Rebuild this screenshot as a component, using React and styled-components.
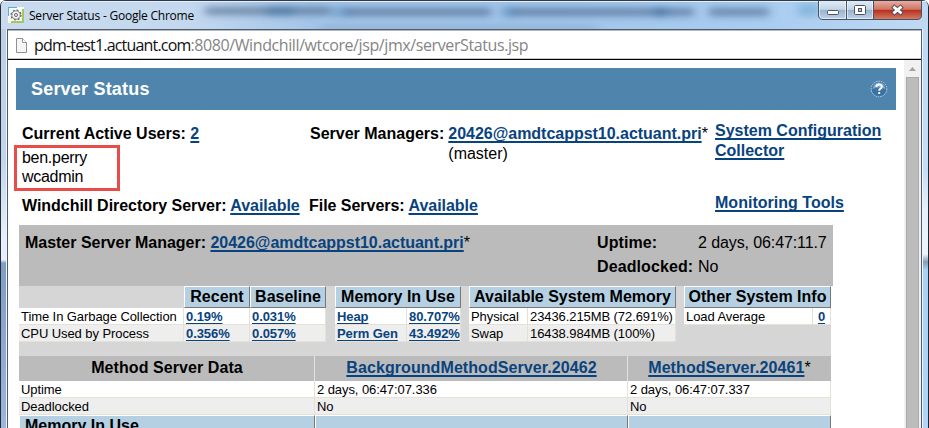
import React from 'react';
import styled, { createGlobalStyle } from 'styled-components';

const GlobalStyle = createGlobalStyle`
  * {
    box-sizing: border-box;
  }

  body {
    margin: 0;
    overflow: hidden;
    background: #fff;
    font-family: 'Liberation Sans', Arial, sans-serif;
    color: #000;
  }
`;

const Window = styled.div`
  display: grid;
  grid-template-rows: 29px 399px;
  width: 929px;
  height: 428px;
  overflow: hidden;
  border-left: 1px solid #252d3b;
  border-right: 1px solid #20262f;
  border-radius: 6px 7px 0 0;
  background: #b8d0ec;
`;

const TitleBar = styled.div`
  position: relative;
  display: flex;
  align-items: flex-start;
  border-top: 1px solid #303a4a;
  box-shadow: inset 0 1px #e3effb;
  background: linear-gradient(90deg, #c9daed 0, #c3d8ef 190px, #a4c5e8 310px, #a2c5eb 560px, #a9ccf0 760px, #bfd9f3 100%);
`;

const Backdrop = styled.svg`
  position: absolute;
  left: 0;
  top: 1px;
`;

const AppIcon = styled.svg`
  position: relative;
  margin: 6px 0 0 7px;
`;

const WindowTitle = styled.div`
  position: relative;
  margin: 6px auto 0 5px;
  font: 12px/18px 'Open Sans', 'Noto Sans', sans-serif;
  letter-spacing: -0.22px;
  color: #000;
  white-space: nowrap;
`;

const WindowButtons = styled.svg`
  position: relative;
  margin-right: 6px;
`;

const Frame = styled.div`
  display: grid;
  grid-template-columns: 6px 915px 6px;
`;

const Edge = styled.div`
  background: ${(props) => props.$right
    ? 'linear-gradient(90deg, #f0f6fc 1px, transparent 1px), linear-gradient(#bfd9f5 0, #c5ddf8 140px, #e6f0fb 180px, #edf4fb 225px, #829db7 233px, #a9d0f7 241px, #b0d5f9 100%)'
    : 'linear-gradient(90deg, transparent 5px, #edf4fc 5px), linear-gradient(#bdcfe4 0, #c1d5ec 130px, #e9effa 210px, #e9effa 231px, #809dc2 234px, #9bb8db 100%)'};
`;

const Client = styled.div`
  border: 1px solid #4d5b6c;
  border-bottom: 0;
  background: #fff;
`;

const AddressBar = styled.div`
  display: flex;
  align-items: center;
  height: 30px;
  padding-left: 8px;
  border-top: 1px solid #b4bbc4;
  border-bottom: 1px solid #000;
  box-shadow: inset 0 -1px #c4cbd4;
`;

const Url = styled.div`
  margin-left: 7px;
  font: 16px/26px 'Open Sans', 'Noto Sans', sans-serif;
  letter-spacing: -0.4px;
  color: #858585;
  white-space: nowrap;

  span {
    color: #111;
    letter-spacing: -0.82px;
  }
`;

const Viewport = styled.div`
  display: grid;
  grid-template-columns: 896px 17px;
  height: 368px;
`;

const Scrollbar = styled.div`
  display: flex;
  flex-direction: column;
  align-items: center;
  background: #f1f1f1;
`;

const Thumb = styled.div`
  width: 13px;
  flex: 1;
  border: 1px solid #a8a8a8;
  border-bottom: 0;
  background: #bcbcbc;
`;

const Page = styled.div`
  height: 368px;
  padding: 8px 8px 0;
  overflow: hidden;
`;

const PageHeader = styled.div`
  display: flex;
  align-items: center;
  justify-content: space-between;
  height: 42px;
  padding: 0 8px 0 15px;
  background: #4f85ad;
  color: #fff;
  font-size: 18px;
  font-weight: bold;
  letter-spacing: 0.2px;
`;

const Link = styled.a`
  color: #08437f;
  font-weight: bold;
  text-decoration: underline;
  text-decoration-thickness: ${(props) => (props.$small ? '1px' : '2px')};
  text-underline-offset: 2px;
  text-decoration-skip-ink: none;
`;

const Summary = styled.div`
  display: grid;
  grid-template-columns: 288px 405px 1fr;
  height: 81px;
  padding-left: 6px;
  font-size: 16px;
  line-height: 20px;
  white-space: nowrap;
`;

const ActiveUsers = styled.div`
  padding-top: 14px;
`;

const UserList = styled.div`
  width: 106px;
  height: 46px;
  margin: 1px 0 0 -8px;
  padding: 0 5px;
  border: 3px solid #e94d49;
  line-height: 19px;
  letter-spacing: -0.28px;
`;

const Managers = styled.div`
  display: flex;
  gap: 4px;
  padding-top: 14px;
`;

const ManagerLink = styled(Link)`
  letter-spacing: -0.02px;
`;

const Tools = styled.div`
  padding-top: 11px;
`;

const Services = styled.div`
  display: grid;
  grid-template-columns: 287px 406px 1fr;
  height: 34px;
  padding: 5px 0 0 6px;
  font-size: 16px;
  line-height: 20px;
  letter-spacing: -0.03px;
  white-space: nowrap;
`;

const MonitoringTools = styled.div`
  margin-top: -3px;
  letter-spacing: 0.02px;
`;

const ManagerPanel = styled.div`
  display: grid;
  grid-template-columns: 572px 101px 1fr;
  grid-template-rows: 24px 24px;
  width: 814px;
  height: 61px;
  margin-left: 3px;
  padding: 6px 0 0 6px;
  background: #bbb;
  font-size: 16px;
  line-height: 24px;
`;

const PanelTitle = styled.div`
  letter-spacing: -0.02px;
`;

const PanelLabel = styled.b`
  letter-spacing: 0.1px;
`;

const PanelValue = styled.div`
  letter-spacing: -0.1px;
`;

const Metrics = styled.div`
  display: flex;
  align-items: flex-start;
  width: 812px;
  height: 70px;
  margin-left: 3px;
  background: #d6d6d6;
`;

const MetricTable = styled.div`
  display: grid;
  grid-template-columns: ${(props) => props.$columns};
  grid-template-rows: 22px;
  grid-auto-rows: 17px;
  margin-right: ${(props) => props.$gap}px;
`;

const HeadCell = styled.div`
  grid-column: span ${(props) => props.$span || 1};
  border: 1px solid;
  border-color: #fff #777 #777 #fff;
  background: #b4d0e2;
  font-size: 16px;
  font-weight: bold;
  line-height: 19px;
  text-align: center;
  white-space: nowrap;
`;

const Cell = styled.div`
  padding: 0 2px;
  border-right: 1px solid #e3e2d5;
  border-bottom: 1px solid #e3e2d5;
  background: ${(props) => (props.$alt ? '#eee' : '#fff')};
  font-size: 13px;
  line-height: 17px;
  letter-spacing: -0.08px;
  text-align: ${(props) => props.$align || 'left'};
  white-space: nowrap;
`;

const MethodTable = styled.div`
  display: grid;
  grid-template-columns: 296px 313px 203px;
  grid-template-rows: 25px 17px 17px 22px;
  width: 812px;
  margin-left: 3px;
`;

const MethodHead = styled.div`
  padding-left: 1px;
  border-right: 1px solid ${(props) => (props.$last ? '#bbb' : '#e3e3e0')};
  background: #bbb;
  font-size: 16px;
  font-weight: bold;
  line-height: 23px;
  letter-spacing: 0.08px;
  text-align: center;
`;

const SectionCell = styled.div`
  padding-left: 5px;
  border-top: 1px solid #fff;
  border-left: 1px solid #fff;
  border-right: 1px solid #777;
  background: #b4d0e2;
  font-size: 16px;
  font-weight: bold;
  line-height: 19px;
`;

const Star = styled.span`
  font-weight: normal;
`;

const BlurredDesktop = () => (
  <Backdrop width="927" height="27">
    <defs>
      <filter id="soft" filterUnits="userSpaceOnUse" x="0" y="-20" width="927" height="70">
        <feGaussianBlur stdDeviation="5 3" />
      </filter>
    </defs>
    <g filter="url(#soft)" fill="none" stroke="#2f486b">
      <path d="M204 9H330M345 10H490M510 10H693M708 10H768" strokeWidth="9" opacity=".45" />
      <path d="M265 9h28M332 10h17M500 10h14M652 10h15" stroke="#2b6799" strokeWidth="11" opacity=".35" />
      <path d="M320 26h275" strokeWidth="3" opacity=".3" />
      <path d="M797 8h22" stroke="#60a2ce" strokeWidth="13" opacity=".5" />
    </g>
  </Backdrop>
);

const GearIcon = () => (
  <AppIcon width="16" height="16" viewBox="0 0 16 16">
    <rect width="16" height="16" fill="#f9fbf6" />
    <path d="M0 0H9V1H1V9H0Z" fill="#58aee1" />
    <path d="M16 2V16H3V14H14V2Z" fill="#a5c85a" />
    <circle cx="8" cy="8" r="4.2" fill="#f4f4f4" stroke="#666" strokeWidth=".8" />
    <circle cx="8" cy="8" r="5" fill="none" stroke="#555" strokeWidth="1.1" strokeDasharray="1.9 2.03" />
    <circle cx="8" cy="8" r="1.5" fill="#fff" stroke="#555" strokeWidth=".9" />
  </AppIcon>
);

const Controls = () => (
  <WindowButtons width="104" height="20">
    <defs>
      <linearGradient id="glass" x1="0" y1="0" x2="0" y2="1">
        <stop offset="0" stopColor="#dfecf7" />
        <stop offset=".45" stopColor="#c2d5e8" />
        <stop offset=".5" stopColor="#9ab3cc" />
        <stop offset="1" stopColor="#bdd5eb" />
      </linearGradient>
      <linearGradient id="close" x1="0" y1="0" x2="0" y2="1">
        <stop offset="0" stopColor="#e9aca0" />
        <stop offset=".45" stopColor="#cf7565" />
        <stop offset=".5" stopColor="#b92f1c" />
        <stop offset="1" stopColor="#d0806a" />
      </linearGradient>
    </defs>
    <path d="M.5 0V14Q.5 18.5 5 18.5H56V0Z" fill="url(#glass)" />
    <path d="M56 0V18.5H99Q103.5 18.5 103.5 14V0Z" fill="url(#close)" />
    <path d="M.5 0V14Q.5 18.5 5 18.5H99Q103.5 18.5 103.5 14V0M28.5 0V18M55.5 0V18" fill="none" stroke="#4b5361" />
    <path d="M1.5 0V14Q1.5 17.5 5 17.5H27.5V0M29.5 0V17.5H54.5V0" fill="none" stroke="#fff" opacity=".55" />
    <rect x="9.5" y="9.5" width="11" height="4" rx="1" fill="#fff" stroke="#4c5261" />
    <rect x="36.5" y="4.5" width="11" height="9" rx="1" fill="#fff" stroke="#4c5261" />
    <rect x="40.5" y="7.5" width="3" height="3" fill="#b2c6da" stroke="#4c5261" />
    <path d="M76.5 6.5 82.5 11.5M82.5 6.5 76.5 11.5" fill="none" stroke="#554d58" strokeWidth="4.7" strokeLinecap="square" />
    <path d="M76.5 6.5 82.5 11.5M82.5 6.5 76.5 11.5" fill="none" stroke="#fff" strokeWidth="2.8" strokeLinecap="square" />
  </WindowButtons>
);

const PageIcon = () => (
  <svg width="11" height="15" viewBox="0 0 11 15">
    <path d="M.5 .5H6.5L10.5 4.5V14.5H.5Z" fill="#f6f6f6" stroke="#919191" />
    <path d="M6.5 .5V4.5H10.5" fill="#fff" stroke="#919191" />
  </svg>
);

const HelpIcon = () => (
  <svg width="18" height="18" viewBox="0 0 18 18">
    <circle cx="9" cy="9" r="7.5" fill="#3c73a5" />
    <path d="M2.5 9Q3 3 9 2.2Q15 3 15.5 9Q9 6 2.5 9Z" fill="#7aa6cb" />
    <circle cx="9" cy="9" r="7.8" fill="none" stroke="#d5e1ec" strokeWidth=".9" strokeDasharray="1.4 1" />
    <path d="M6.3 7Q6.3 4.5 9 4.5Q11.8 4.5 11.8 6.7Q11.8 8 10.2 8.8Q9.2 9.3 9.2 10.8M9.2 12V14" fill="none" stroke="#fff" strokeWidth="1.9" />
  </svg>
);

// the small tables under the master server manager panel
const metricTables = [
  {
    columns: '165px 66px 76px',
    gap: 9,
    heads: [{ text: '' }, { text: 'Recent' }, { text: 'Baseline' }],
    rows: [
      [{ text: 'Time In Garbage Collection' }, { text: '0.19%', link: true }, { text: '0.031%', link: true }],
      [{ text: 'CPU Used by Process' }, { text: '0.356%', link: true }, { text: '0.057%', link: true }],
    ],
  },
  {
    columns: '72px 54px',
    gap: 8,
    heads: [{ text: 'Memory In Use', span: 2 }],
    rows: [
      [{ text: 'Heap', link: true }, { text: '80.707%', link: true, align: 'right' }],
      [{ text: 'Perm Gen', link: true }, { text: '43.492%', link: true, align: 'right' }],
    ],
  },
  {
    columns: '59px 148px',
    gap: 8,
    heads: [{ text: 'Available System Memory', span: 2 }],
    rows: [
      [{ text: 'Physical' }, { text: '23436.215MB (72.691%)' }],
      [{ text: 'Swap' }, { text: '16438.984MB (100%)' }],
    ],
  },
  {
    columns: '129px 18px',
    gap: 0,
    heads: [{ text: 'Other System Info', span: 2 }],
    rows: [[{ text: 'Load Average' }, { text: '0', link: true, align: 'center' }]],
  },
];

const SmallTable = ({ table }) => (
  <MetricTable $columns={table.columns} $gap={table.gap}>
    {table.heads.map((head, i) => (
      head.text ? <HeadCell key={i} $span={head.span}>{head.text}</HeadCell> : <div key={i} />
    ))}
    {table.rows.map((row, r) => row.map((cell, c) => (
      <Cell key={`${r}-${c}`} $alt={r % 2 === 1} $align={cell.align}>
        {cell.link ? <Link $small>{cell.text}</Link> : cell.text}
      </Cell>
    )))}
  </MetricTable>
);

const App = () => (
  <>
    <GlobalStyle />
    <Window>
      <TitleBar>
        <BlurredDesktop />
        <GearIcon />
        <WindowTitle>Server Status - Google Chrome</WindowTitle>
        <Controls />
      </TitleBar>
      <Frame>
        <Edge />
        <Client>
          <AddressBar>
            <PageIcon />
            <Url><span>pdm-test1.actuant.com</span>:8080/Windchill/wtcore/jsp/jmx/serverStatus.jsp</Url>
          </AddressBar>
          <Viewport>
            <Page>
              <PageHeader>
                Server Status
                <HelpIcon />
              </PageHeader>
              <Summary>
                <ActiveUsers>
                  <b>Current Active Users: <Link>2</Link></b>
                  <UserList>
                    <div>ben.perry</div>
                    <div>wcadmin</div>
                  </UserList>
                </ActiveUsers>
                <Managers>
                  <b>Server Managers:</b>
                  <div>
                    <ManagerLink>20426@amdtcappst10.actuant.pri</ManagerLink>*
                    <div>(master)</div>
                  </div>
                </Managers>
                <Tools>
                  <Link>System Configuration<br />Collector</Link>
                </Tools>
              </Summary>
              <Services>
                <b>Windchill Directory Server: <Link>Available</Link></b>
                <b>File Servers: <Link>Available</Link></b>
                <MonitoringTools><Link>Monitoring Tools</Link></MonitoringTools>
              </Services>
              <ManagerPanel>
                <PanelTitle>
                  <b>Master Server Manager:</b> <Link>20426@amdtcappst10.actuant.pri</Link>*
                </PanelTitle>
                <PanelLabel>Uptime:</PanelLabel>
                <PanelValue>2 days, 06:47:11.7</PanelValue>
                <div />
                <PanelLabel>Deadlocked:</PanelLabel>
                <PanelValue>No</PanelValue>
              </ManagerPanel>
              <Metrics>
                {metricTables.map((table, i) => <SmallTable key={i} table={table} />)}
              </Metrics>
              <MethodTable>
                <MethodHead>Method Server Data</MethodHead>
                <MethodHead><Link>BackgroundMethodServer.20462</Link></MethodHead>
                <MethodHead $last><Link>MethodServer.20461</Link><Star>*</Star></MethodHead>
                <Cell>Uptime</Cell>
                <Cell>2 days, 06:47:07.336</Cell>
                <Cell>2 days, 06:47:07.337</Cell>
                <Cell $alt>Deadlocked</Cell>
                <Cell $alt>No</Cell>
                <Cell $alt>No</Cell>
                <SectionCell>Memory In Use</SectionCell>
                <SectionCell />
                <SectionCell />
              </MethodTable>
            </Page>
            <Scrollbar>
              <svg width="17" height="17">
                <path d="M5 11 8.5 7 12 11Z" fill="#a3a3a3" />
              </svg>
              <Thumb />
            </Scrollbar>
          </Viewport>
        </Client>
        <Edge $right />
      </Frame>
    </Window>
  </>
);

export default App;
